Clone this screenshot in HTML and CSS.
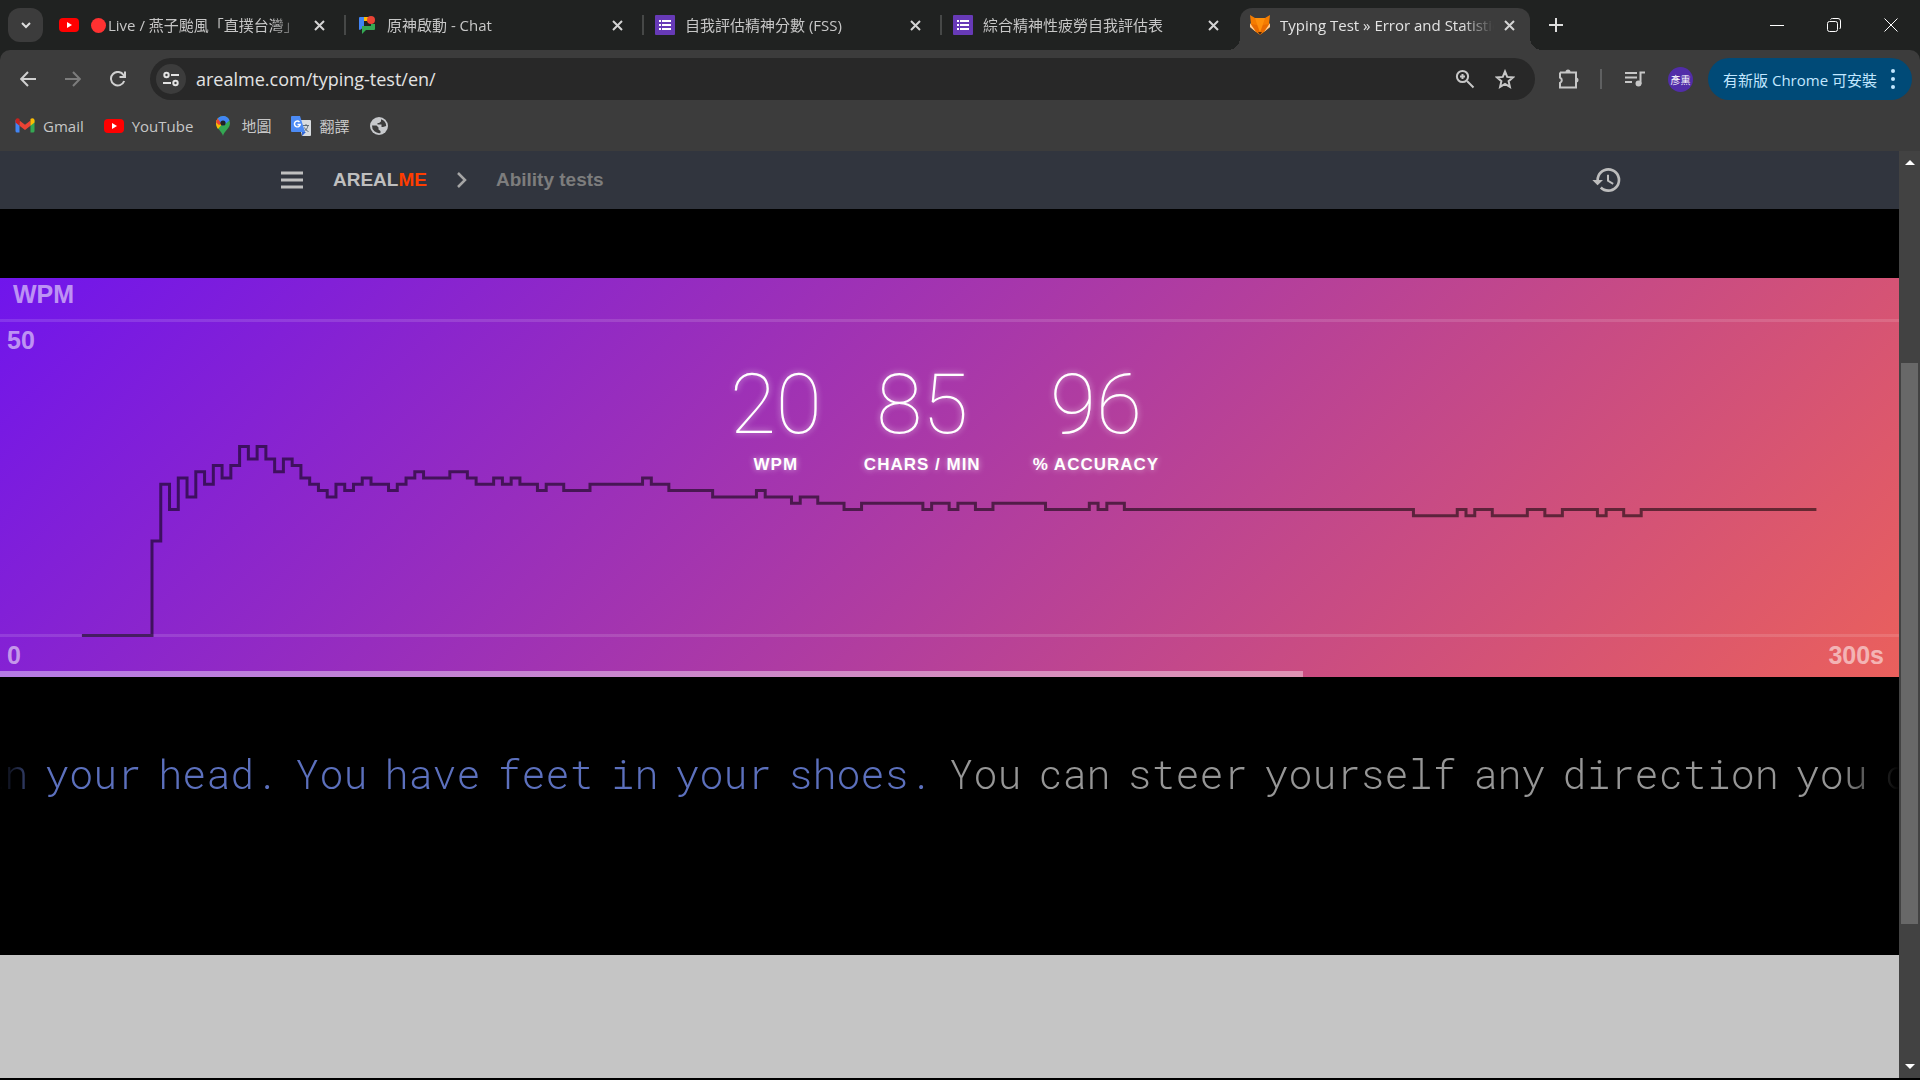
FILE: index.html
```html
<!DOCTYPE html>
<html lang="zh-Hant">
<head>
<meta charset="utf-8">
<title>Typing Test » Error and Statistics</title>
<link rel="stylesheet" href="styles.css">
</head>
<body>
<div class="browser">
  <header class="chrome">
    <div class="tabstrip">
      <button class="tab-search" aria-label="Search tabs"><svg width="14" height="14" viewBox="0 0 14 14"><path d="M3 5l4 4 4-4" fill="none" stroke="#dedede" stroke-width="2"/></svg></button>
      <div class="tab">
        <svg class="fav" viewBox="0 0 20 20"><rect y="3" width="20" height="14" rx="4" fill="#f00"/><path d="M8 7l5 3-5 3z" fill="#fff"/></svg>
        <span class="tab-title"><i class="live-dot"></i>Live / 燕子颱風「直撲台灣」</span>
        <button class="close" aria-label="Close tab"><svg width="11" height="11" viewBox="0 0 11 11"><path d="M1 1l9 9M10 1l-9 9"/></svg></button>
      </div>
      <div class="tab">
        <svg class="fav" viewBox="0 0 20 20"><path d="M3 2h4v10l-4 3a1 1 0 0 1-1-1V3a1 1 0 0 1 1-1z" fill="#4285f4"/><path d="M7 2h4v4H7z" fill="#fbbc04"/><path d="M5 11h9V9h4v5a1 1 0 0 1-1 1H9l-4 4z" fill="#34a853"/><circle cx="14" cy="5" r="4" fill="#ea4335"/></svg>
        <span class="tab-title">原神啟動 - Chat</span>
        <button class="close" aria-label="Close tab"><svg width="11" height="11" viewBox="0 0 11 11"><path d="M1 1l9 9M10 1l-9 9"/></svg></button>
      </div>
      <div class="tab">
        <svg class="fav" viewBox="0 0 20 20"><rect width="20" height="20" rx="1" fill="#673ab7"/><path d="M4 5h2v2H4zM7 5h9v2H7zM4 9h2v2H4zM7 9h9v2H7zM4 13h2v2H4zM7 13h9v2H7z" fill="#fff"/></svg>
        <span class="tab-title">自我評估精神分數 (FSS)</span>
        <button class="close" aria-label="Close tab"><svg width="11" height="11" viewBox="0 0 11 11"><path d="M1 1l9 9M10 1l-9 9"/></svg></button>
      </div>
      <div class="tab tab-last">
        <svg class="fav" viewBox="0 0 20 20"><rect width="20" height="20" rx="1" fill="#673ab7"/><path d="M4 5h2v2H4zM7 5h9v2H7zM4 9h2v2H4zM7 9h9v2H7zM4 13h2v2H4zM7 13h9v2H7z" fill="#fff"/></svg>
        <span class="tab-title">綜合精神性疲勞自我評估表</span>
        <button class="close" aria-label="Close tab"><svg width="11" height="11" viewBox="0 0 11 11"><path d="M1 1l9 9M10 1l-9 9"/></svg></button>
      </div>
      <div class="tab tab-active">
        <svg class="fav" viewBox="0 0 20 20"><path d="M0 0l5 3h10l5-3-1 9 1 3-6 5-4 3-4-3-6-5 1-3z" fill="#f57c00"/><path d="M0 8l6 9-6-5zM20 8l-6 9 6-5z" fill="#ffcc94"/><path d="M5 3h10l-2 6-3 8-3-8z" fill="#ff8f0a"/><path d="M1 9l6 1 3 8-4-2zM19 9l-6 1-3 8 4-2z" fill="#e86a00"/><path d="M8 17h4l-2 3z" fill="#4e2a12"/></svg>
        <span class="tab-title">Typing Test » Error and Statistics</span>
        <button class="close" aria-label="Close tab"><svg width="11" height="11" viewBox="0 0 11 11"><path d="M1 1l9 9M10 1l-9 9"/></svg></button>
      </div>
      <button class="new-tab" aria-label="New tab"><svg width="14" height="14" viewBox="0 0 14 14"><path d="M7 0v14M0 7h14" stroke="#dedede" stroke-width="2"/></svg></button>
      <div class="window-buttons">
        <button aria-label="Minimize"><svg width="14" height="14" viewBox="0 0 14 14"><path d="M0 7.5h14"/></svg></button>
        <button aria-label="Restore"><svg width="14" height="14" viewBox="0 0 14 14"><rect x=".5" y="3.5" width="10" height="10" rx="2"/><path d="M3.5 1.5Q4 .5 5.5 .5H11Q13.5 .5 13.5 3V9Q13.5 10.5 12.5 11"/></svg></button>
        <button aria-label="Close"><svg width="14" height="14" viewBox="0 0 14 14"><path d="M.5 .5l13 13M13.5 .5l-13 13"/></svg></button>
      </div>
    </div>

    <div class="toolbar">
      <div class="nav-buttons">
        <button aria-label="Back"><svg width="16" height="16" viewBox="0 0 16 16"><path d="M16 8H1.5M8 1L1.2 8 8 15"/></svg></button>
        <button class="disabled" aria-label="Forward"><svg width="16" height="16" viewBox="0 0 16 16"><path d="M0 8h14.5M8 1l6.8 7L8 15"/></svg></button>
        <button aria-label="Reload"><svg width="16" height="16" viewBox="0 0 16 16"><path d="M14.2 10A6.8 6.8 0 1 1 13.5 4L15 6M15 .5V6H9.5"/></svg></button>
      </div>
      <div class="omnibox">
        <button class="site-info" aria-label="Site information"><svg width="16" height="16" viewBox="0 0 16 16" fill="none" stroke="#e3e3e3" stroke-width="2"><circle cx="3.5" cy="4" r="2.2"/><path d="M8 4h8M0 12h8"/><circle cx="12.5" cy="12" r="2.2"/></svg></button>
        <input class="url" type="text" aria-label="Address" value="arealme.com/typing-test/en/">
        <button class="omni-icon" aria-label="Zoom"><svg width="20" height="20" viewBox="0 0 20 20"><circle cx="7.5" cy="7.5" r="5.6"/><path d="M12 12l6.5 6.5M7.5 5v5M5 7.5h5"/></svg></button>
        <button class="omni-icon" aria-label="Bookmark"><svg width="20" height="20" viewBox="0 0 20 20"><path d="M10 2.500l2.200 5.400 5.800.5-4.400 3.800 1.300 5.600L10 14.800l-4.900 3 1.300-5.600L2 8.400l5.800-.5z"/></svg></button>
      </div>
      <div class="actions">
        <button class="extensions" aria-label="Extensions"><svg width="22" height="22" viewBox="0 0 22 22"><path d="M3 4.500h16v5.500M19 14v5.500H3V15a3 3 0 0 0 0-5.500V4.500M19 10v4"/><path d="M8.500 4a2.500 2.500 0 0 1 5 0zM19 9.500a2.500 2.500 0 0 1 0 5z" fill="#c7c7c7" stroke="none"/></svg></button>
        <i class="divider"></i>
        <button class="media" aria-label="Media controls"><svg width="20" height="16" viewBox="0 0 20 16"><path d="M0 2h12M0 6.500h12M0 11h7M15.500 13V1.500H20"/><circle cx="13.5" cy="12.5" r="2" fill="#c7c7c7"/></svg></button>
        <button class="avatar" aria-label="Profile">彥熏</button>
        <button class="update">有新版 Chrome 可安裝<svg width="4" height="20" viewBox="0 0 4 20"><circle cx="2" cy="2" r="2"/><circle cx="2" cy="10" r="2"/><circle cx="2" cy="18" r="2"/></svg></button>
      </div>
    </div>

    <nav class="bookmarks">
      <a href="#"><svg width="20" height="15" viewBox="0 0 19 15"><path d="M0 2v11a1.500 1.500 0 0 0 1.500 1.500H4V5z" fill="#4285f4"/><path d="M19 2v11a1.500 1.500 0 0 1-1.500 1.500H15V5z" fill="#34a853"/><path d="M4 2.500l5.500 4.300L15 2.500v5.200L9.500 12 4 7.700z" fill="#ea4335"/><path d="M0 2.500C0 .3 2.300-.5 4 1v6.700L0 4.500z" fill="#c5221f"/><path d="M19 2.500c0-2.200-2.300-3-4-1.500v6.700l4-3.200z" fill="#fbbc04"/></svg>Gmail</a>
      <a href="#"><svg width="20" height="14" viewBox="0 0 20 14"><rect width="20" height="14" rx="4" fill="#f00"/><path d="M8 4l5 3-5 3z" fill="#fff"/></svg>YouTube</a>
      <a href="#"><svg width="20" height="20" viewBox="0 0 15 20"><path d="M7.500 20C6.500 15 .5 12.500.5 7a7 7 0 0 1 14 0c0 5.500-6 8-7 13z" fill="#34a853"/><path d="M.5 7a7 7 0 0 1 1.700-4.600L7.500 7l-5 6C1.300 11.300.5 9.500.5 7z" fill="#fbbc04"/><path d="M2.200 2.400L7.500 7 3.500 9 .6 6.500c.1-1.500.6-3 1.600-4.100z" fill="#ea4335"/><path d="M2.200 2.400A7 7 0 0 1 14 4.500L7.500 10l-2-3z" fill="#4285f4"/><circle cx="7.5" cy="7" r="2.6" fill="#202124"/></svg>地圖</a>
      <a href="#"><svg width="20" height="20" viewBox="0 0 20 20"><path d="M7 4h12a1 1 0 0 1 1 1v14a1 1 0 0 1-1 1h-8z" fill="#d8dce0"/><path d="M12 9.500h6M15 8v1.500M17 9.500c-.5 3-2 4.500-4 6M13.500 11.500c.8 2 2 3.200 4 4" fill="none" stroke="#5f6d7a"/><path d="M11 16h4l-4 4z" fill="#3367d6"/><path d="M1 0h8l5 16H1a1 1 0 0 1-1-1V1a1 1 0 0 1 1-1z" fill="#4c8bf5"/><path d="M8.500 6A2.900 2.900 0 1 0 9.200 8.500H6.500" fill="none" stroke="#fff" stroke-width="1.4"/></svg>翻譯</a>
      <a href="#" aria-label="Web page"><svg width="20" height="18" viewBox="0 0 18 18"><circle cx="9" cy="9" r="9" fill="#c7c9cc"/><path d="M2 8.500h4.500L8.500 10.500V12.500L10.500 14V16A7.200 7.200 0 0 1 2 8.500zM11 2.300V4.500L9 6H7.500V7.500H11.500V10H13L16.200 9A7.200 7.200 0 0 0 11 2.300z" fill="#3c3c3c"/></svg></a>
    </nav>
  </header>

  <div class="viewport">
    <main class="page">
      <nav class="site-nav">
        <button class="menu" aria-label="Menu"><svg width="22" height="18" viewBox="0 0 22 18"><path d="M0 2h22M0 9h22M0 16h22" stroke="#bfbfbf" stroke-width="3"/></svg></button>
        <a class="brand" href="#">AREAL<span>ME</span></a>
        <svg class="chevron" width="10" height="16" viewBox="0 0 10 16"><path d="M1 1l7 7-7 7" fill="none" stroke="#a6a6a6" stroke-width="2.5"/></svg>
        <a class="crumb" href="#">Ability tests</a>
        <button class="history" aria-label="History"><svg width="32" height="32" viewBox="0 0 24 24"><path fill="#bdbdbd" d="M13 3a9 9 0 0 0-9 9H1l3.890 3.890.07.14L9 12H6c0-3.870 3.130-7 7-7s7 3.130 7 7-3.130 7-7 7c-1.930 0-3.680-.79-4.940-2.060l-1.420 1.420A8.954 8.954 0 0 0 13 21a9 9 0 0 0 0-18zm-1 5v5l4.280 2.540.72-1.210-3.500-2.080V8H12z"/></svg></button>
      </nav>

      <section class="chart">
        <svg class="plot" viewBox="0 0 1899 399" preserveAspectRatio="none">
          <path class="grid" d="M0 42.500H1899M0 357.500H1899"/>
          <g transform="translate(152 357.500) scale(8.760 -6.300)">
            <path class="curve" d="M-8 0H0V15H1V24H2V20H3V25H4V22H5V26H6V24H7V27H8V25H9V27H10V30H11V28H12V30H13V28H14V26H15V28H16V27H17V25H18V24H19V23H20V22H21V24H22V23H23V24H24V25H25V24H27V23H28V24H29V25H30V26H31V25H34V26H36V25H37V24H39V25H40V24H41V25H42V24H44V23H45V24H47V23H50V24H56V25H57V24H59V23H64V22H69V23H70V22H73V21H74V22H76V21H79V20H81V21H88V20H89V21H91V20H92V21H94V20H96V21H102V20H107V21H108V20H109V21H111V20H144V19H149V20H150V19H151V20H153V19H157V20H159V19H161V20H165V19H166V20H168V19H170V20H190"/>
          </g>
        </svg>
        <span class="axis axis-title">WPM</span>
        <span class="axis axis-max">50</span>
        <span class="axis axis-zero">0</span>
        <span class="axis axis-time">300s</span>
        <dl class="stats">
          <div class="stat-wpm"><dd>20</dd><dt>WPM</dt></div>
          <div><dd>85</dd><dt>CHARS / MIN</dt></div>
          <div><dd>96</dd><dt>% ACCURACY</dt></div>
        </dl>
        <div class="progress"><div class="progress-fill" style="width:68.640%"></div></div>
      </section>

      <section class="typing">
        <p class="words done"><span>in</span> <span>your</span> <span>head.</span> <span>You</span> <span>have</span> <span>feet</span> <span>in</span> <span>your</span> <span>shoes.</span></p>
        <p class="words"><span>You</span> <span>can</span> <span>steer</span> <span>yourself</span> <span>any</span> <span>direction</span> <span>you</span> <span>choose.</span></p>
      </section>
      <section class="below"></section>
    </main>
    <div class="scrollbar">
      <i class="arrow arrow-up"></i>
      <div class="track"><div class="thumb"></div></div>
      <i class="arrow arrow-down"></i>
    </div>
  </div>
</div>
</body>
</html>
```

FILE: styles.css
```css
* { box-sizing: border-box; }
body {
  margin: 0;
  background: #000;
  font-family: "Open Sans", "Noto Sans CJK TC", sans-serif;
}
button {
  display: flex;
  align-items: center;
  justify-content: center;
  flex: none;
  margin: 0;
  padding: 0;
  border: 0;
  background: none;
  font: inherit;
  color: inherit;
}
a { color: inherit; text-decoration: none; }
svg { flex: none; display: block; }

.browser {
  display: flex;
  flex-direction: column;
  height: 100vh;
  padding-bottom: 2px;
}

/* browser chrome */
.chrome { flex: none; background: #202221; color: #dfdfdf; }
.tabstrip { display: flex; height: 50px; padding: 8px 0 0 8px; }
.tab-search {
  width: 35px;
  height: 34px;
  margin-right: 5px;
  border-radius: 12px;
  background: #3c3c3c;
}
.tab {
  position: relative;
  display: flex;
  flex: 0 1 298px;
  min-width: 0;
  height: 34px;
  padding: 0 21px 0 11px;
  align-items: center;
  gap: 10px;
  font-size: 15px;
  line-height: 22px;
  color: #c7c7c7;
}
.tab:not(.tab-last):not(.tab-active)::after {
  content: "";
  position: absolute;
  right: 0;
  top: 7px;
  width: 2px;
  height: 20px;
  background: #464847;
}
.fav { width: 20px; height: 20px; }
.tab-title {
  flex: 1;
  min-width: 0;
  overflow: hidden;
  white-space: nowrap;
  mask-image: linear-gradient(to left, transparent 0, #000 32px);
}
.live-dot {
  display: inline-block;
  width: 15px;
  height: 15px;
  margin: 0 2px;
  border-radius: 50%;
  background: #ff3131;
  vertical-align: -2px;
}
.close svg { fill: none; stroke: #d4d4d4; stroke-width: 2; }
.tab-active {
  flex-basis: 290px;
  height: 42px;
  padding: 0 15px 8px 10px;
  border-radius: 12px 12px 0 0;
  background: #3c3c3c;
  color: #e3e3e3;
}
.tab-active::before,
.tab-active::after {
  content: "";
  position: absolute;
  bottom: 0;
  width: 12px;
  height: 12px;
}
.tab-active::before { right: 100%; background: radial-gradient(circle at 0 0, transparent 12px, #3c3c3c 12px); }
.tab-active::after { left: 100%; background: radial-gradient(circle at 100% 0, transparent 12px, #3c3c3c 12px); }
.new-tab { width: 52px; height: 34px; }
.window-buttons { display: flex; margin-left: auto; height: 34px; padding-right: 1px; }
.window-buttons button { width: 57px; }
.window-buttons svg { fill: none; stroke: #fff; }

.toolbar {
  display: flex;
  align-items: center;
  height: 58px;
  padding: 0 8px 0 5px;
  border-radius: 10px 10px 0 0;
  background: #3c3c3c;
}
.nav-buttons { display: flex; flex: none; width: 145px; }
.nav-buttons button { width: 45px; height: 40px; }
.nav-buttons svg { fill: none; stroke: #d0d0d0; stroke-width: 2; }
.nav-buttons .disabled svg { stroke: #7c7c7c; }
.omnibox {
  display: flex;
  flex: 1;
  align-items: center;
  height: 42px;
  padding: 0 10px 0 6px;
  border-radius: 21px;
  background: #282828;
}
.site-info {
  width: 30px;
  height: 30px;
  border-radius: 50%;
  background: #3c3c3c;
}
.url {
  flex: 1;
  min-width: 0;
  height: 30px;
  padding: 0 0 0 10px;
  border: 0;
  outline: 0;
  background: none;
  font: 18px/30px "Open Sans", "Noto Sans CJK TC", sans-serif;
  color: #e3e3e3;
}
.omni-icon { width: 40px; height: 30px; }
.omni-icon svg, .extensions svg, .media svg { fill: none; stroke: #c7c7c7; stroke-width: 2; }
.actions { display: flex; flex: none; align-items: center; }
.extensions { width: 65px; height: 30px; }
.divider { width: 2px; height: 20px; background: #5f6061; }
.media { width: 66px; height: 30px; }
.avatar {
  width: 25px;
  height: 25px;
  margin-right: 15px;
  border-radius: 50%;
  background: #512da8;
  font-size: 10px;
  color: #fff;
}
.update {
  gap: 14px;
  width: 204px;
  height: 42px;
  padding-right: 2px;
  border-radius: 21px;
  background: #004a77;
  font-size: 15px;
  color: #c2e7ff;
  white-space: nowrap;
}
.update svg { fill: #c2e7ff; }
.bookmarks {
  display: flex;
  align-items: center;
  gap: 20px;
  height: 43px;
  padding: 0 15px 8px;
  background: #3c3c3c;
  font-size: 15px;
  line-height: 22px;
  color: #c7c7c7;
}
.bookmarks a { display: flex; align-items: center; gap: 8px; }

/* web page */
.viewport { display: flex; flex: 1; min-height: 0; }
.page {
  display: flex;
  flex: 1;
  flex-direction: column;
  min-width: 0;
  font-family: "Liberation Sans", Arial, sans-serif;
}
.site-nav {
  display: flex;
  flex: none;
  align-items: center;
  height: 58px;
  padding: 0 276px 0 281px;
  background: #31353e;
  font-size: 19px;
  font-weight: bold;
}
.brand { margin-left: 30px; color: #bfbfbf; }
.brand span { color: #ff3d00; }
.chevron { margin: 0 29px 0 30px; }
.crumb { color: #7d7d7d; }
.history { margin-left: auto; }

.chart {
  position: relative;
  display: flex;
  flex: none;
  flex-direction: column;
  height: 399px;
  margin-top: 69px;
  background: linear-gradient(135deg, #7015ec, #ea605c);
}
.plot { position: absolute; width: 100%; height: 100%; }
.grid { fill: none; stroke: rgba(255, 255, 255, .13); stroke-width: 3; }
.curve {
  fill: none;
  stroke: rgba(0, 0, 0, .54);
  stroke-width: 3;
  vector-effect: non-scaling-stroke;
}
.axis {
  position: absolute;
  font-size: 25px;
  line-height: 28px;
  font-weight: bold;
  color: rgba(255, 255, 255, .55);
}
.axis-title { left: 13px; top: 2px; }
.axis-max { left: 7px; top: 48px; }
.axis-zero { left: 7px; bottom: 8px; }
.axis-time { right: 15px; bottom: 8px; }
.stats {
  position: relative;
  display: flex;
  justify-content: center;
  margin: 78px 0 0;
  text-align: center;
  color: #fff;
  text-shadow: 0 0 6px rgba(255, 255, 255, .6);
}
.stats > div {
  display: flex;
  flex-direction: column;
  align-items: center;
  padding: 0 26px;
}
.stats > .stat-wpm { width: 124px; padding: 0; }
.stats dd {
  margin: 0;
  font-family: Roboto, sans-serif;
  font-size: 84px;
  font-weight: 100;
  line-height: 98px;
}
.stats dt { font-size: 17px; font-weight: bold; line-height: 22px; letter-spacing: 1px; }
.progress { position: relative; margin-top: auto; height: 6px; }
.progress-fill { height: 6px; background: rgba(255, 255, 255, .4); }

.typing {
  display: grid;
  grid-template-columns: 1fr 1fr;
  flex: none;
  height: 278px;
  padding-top: 71px;
  overflow: hidden;
  mask-image: linear-gradient(to right, transparent 0, #000 48px, #000 calc(100% - 60px), transparent 100%);
}
.words {
  display: flex;
  gap: 17px;
  margin: 0;
  min-width: 0;
  font: 300 40px/52px "Roboto Mono", "Liberation Mono", monospace;
  color: #969696;
  white-space: nowrap;
}
.done { justify-content: flex-end; padding-right: 17px; color: #5c70bd; }
.below { flex: 1; background: #c5c5c5; }

.scrollbar {
  display: flex;
  flex: none;
  flex-direction: column;
  align-items: center;
  width: 21px;
  padding: 9px 0;
  background: #424242;
}
.arrow { width: 0; height: 0; border: 5px solid transparent; }
.arrow-up { border-top: 0; border-bottom-color: #fff; }
.arrow-down { border-bottom: 0; border-top-color: #fff; }
.track { flex: 1; align-self: stretch; padding: 198px 2px 0; }
.thumb { height: 80%; background: #686868; }
```
